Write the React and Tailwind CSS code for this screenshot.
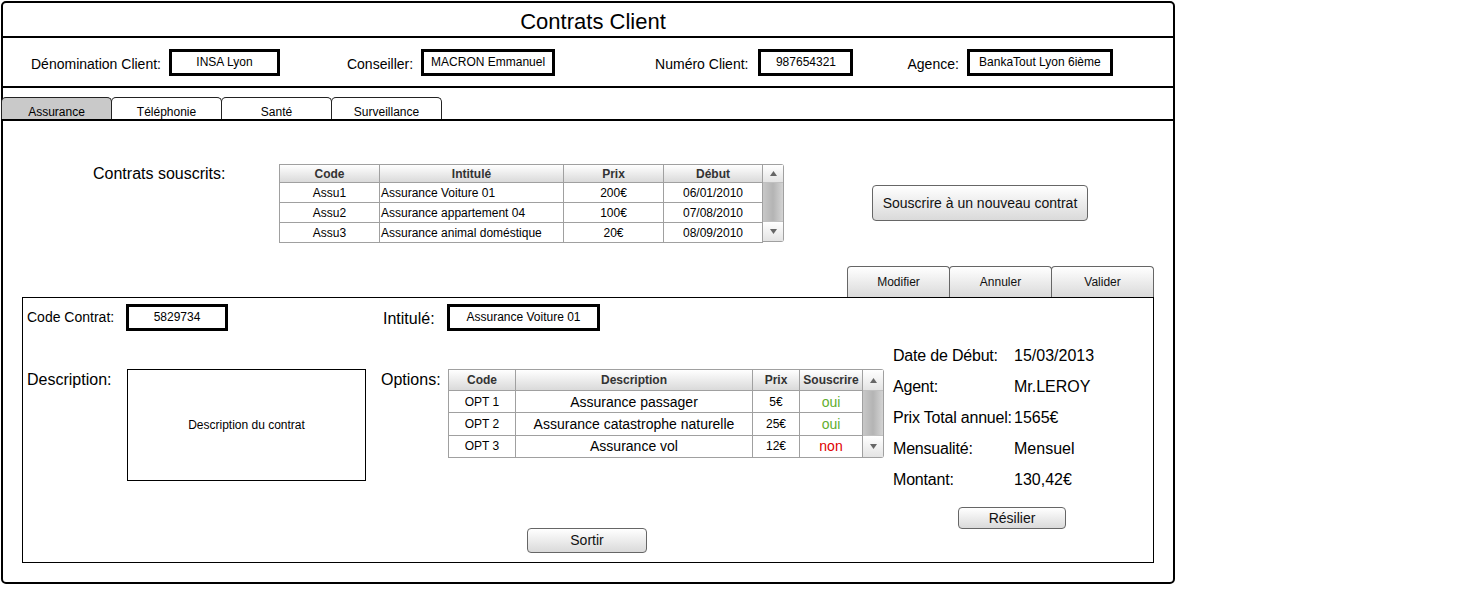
import React from 'react'

const font = { fontFamily: '"Liberation Sans", Arial, sans-serif' }

const contracts = [
  { code: 'Assu1', title: 'Assurance Voiture 01', price: '200€', start: '06/01/2010' },
  { code: 'Assu2', title: 'Assurance appartement 04', price: '100€', start: '07/08/2010' },
  { code: 'Assu3', title: 'Assurance animal doméstique', price: '20€', start: '08/09/2010' },
]

const options = [
  { code: 'OPT 1', desc: 'Assurance passager', price: '5€', sub: 'oui' },
  { code: 'OPT 2', desc: 'Assurance catastrophe naturelle', price: '25€', sub: 'oui' },
  { code: 'OPT 3', desc: 'Assurance vol', price: '12€', sub: 'non' },
]

function Field({ children, className = '' }) {
  return (
    <div className={`flex h-[27px] items-center justify-center border-[3px] border-black text-[12px] ${className}`}>
      {children}
    </div>
  )
}

function Arrow({ up }) {
  return (
    <svg width="7" height="5" viewBox="0 0 7 5">
      {up ? <path d="M0 5 L3.5 0 L7 5 Z" fill="#666" /> : <path d="M0 0 L3.5 5 L7 0 Z" fill="#666" />}
    </svg>
  )
}

function Scrollbar({ headH, downH }) {
  return (
    <div className="flex w-[21px] flex-col rounded-r-[3px] border border-l-0 border-[#a0a0a0] bg-white">
      <div style={{ height: headH }} className="flex items-center justify-center border-b border-[#c0c0c0] bg-gradient-to-b from-white to-[#e4e4e4]">
        <Arrow up />
      </div>
      <div className="flex-1 bg-gradient-to-r from-[#c8c8c8] via-[#b4b4b4] to-[#d4d4d4]" />
      <div style={{ height: downH }} className="flex items-center justify-center border-t border-[#c0c0c0] bg-gradient-to-b from-white to-[#e4e4e4]">
        <Arrow />
      </div>
    </div>
  )
}

function Button({ children, className = '', small }) {
  return (
    <div className={`flex items-center justify-center border border-[#666] bg-gradient-to-b from-white to-[#dadada] text-[#111] ${small ? 'text-[12px]' : 'text-[14px]'} ${className}`}>
      {children}
    </div>
  )
}

function ContractsTable() {
  const cols = ['w-[100px]', 'w-[184px]', 'w-[100px]', 'w-[99px]']
  return (
    <div className="flex h-[78px] items-stretch">
      <table className="h-[78px] table-fixed border-collapse border border-[#a0a0a0] text-[12px] leading-[14px]">
        <thead>
          <tr className="h-[18px] bg-gradient-to-b from-white to-[#d8d8d8]">
            {['Code', 'Intitulé', 'Prix', 'Début'].map((h, i) => (
              <th key={h} className={`${cols[i]} border border-[#a0a0a0] p-0 text-center font-bold text-[#333]`}>{h}</th>
            ))}
          </tr>
        </thead>
        <tbody>
          {contracts.map((r) => (
            <tr key={r.code} className="h-[20px]">
              <td className="border border-[#a0a0a0] p-0 text-center">{r.code}</td>
              <td className="border border-[#a0a0a0] p-0 pl-[1px] text-left">{r.title}</td>
              <td className="border border-[#a0a0a0] p-0 text-center">{r.price}</td>
              <td className="border border-[#a0a0a0] p-0 text-center">{r.start}</td>
            </tr>
          ))}
        </tbody>
      </table>
      <Scrollbar headH={18} downH={20} />
    </div>
  )
}

function OptionsTable() {
  const cols = ['w-[67px]', 'w-[237px]', 'w-[47px]', 'w-[63px]']
  return (
    <div className="flex h-[89px] items-stretch">
      <table className="h-[89px] table-fixed border-collapse border border-[#a0a0a0] leading-[16px]">
        <thead>
          <tr className="h-[21px] bg-gradient-to-b from-white to-[#d8d8d8] text-[12px]">
            {['Code', 'Description', 'Prix', 'Souscrire'].map((h, i) => (
              <th key={h} className={`${cols[i]} border border-[#a0a0a0] p-0 text-center font-bold text-[#333]`}>{h}</th>
            ))}
          </tr>
        </thead>
        <tbody>
          {options.map((r) => (
            <tr key={r.code} className="h-[22px]">
              <td className="border border-[#a0a0a0] p-0 text-center text-[12px]">{r.code}</td>
              <td className="border border-[#a0a0a0] p-0 text-center text-[14px]">{r.desc}</td>
              <td className="border border-[#a0a0a0] p-0 text-center text-[12px]">{r.price}</td>
              <td className={`border border-[#a0a0a0] p-0 text-center text-[14px] ${r.sub === 'oui' ? 'text-[#5fae2e]' : 'text-[#e00000]'}`}>{r.sub}</td>
            </tr>
          ))}
        </tbody>
      </table>
      <Scrollbar headH={21} downH={22} />
    </div>
  )
}

function Tab({ label, active }) {
  return (
    <div className={`-mr-px flex h-[22px] w-[111px] items-end justify-center rounded-t-[5px] border border-b-0 border-[#222] text-[12px] leading-[14px] ${active ? 'bg-[#c9c9c9]' : 'bg-white'}`}>
      {label}
    </div>
  )
}

const info = [
  ['Date de Début:', '15/03/2013'],
  ['Agent:', 'Mr.LEROY'],
  ['Prix Total annuel:', '1565€'],
  ['Mensualité:', 'Mensuel'],
  ['Montant:', '130,42€'],
]

export default function App() {
  return (
    <div style={font} className="h-[593px] w-[1477px] bg-white pl-[1px] pt-[1px] text-black">
      <div className="flex h-[583px] w-[1174px] flex-col rounded-[5px] border-2 border-black">
        <div className="flex h-[35px] items-center justify-center border-b-2 border-black pl-[10px] pt-[3px] text-[22px]">
          Contrats Client
        </div>

        <div className="flex h-[50px] items-center border-b-2 border-black pl-[28px] text-[14px]">
          <span className="pt-[4px]">Dénomination Client:</span>
          <Field className="ml-[8px] w-[111px]">INSA Lyon</Field>
          <span className="ml-[67px] pt-[4px]">Conseiller:</span>
          <Field className="ml-[8px] w-[134px]">MACRON Emmanuel</Field>
          <span className="ml-[100px] pt-[4px]">Numéro Client:</span>
          <Field className="ml-[10px] w-[95px]">987654321</Field>
          <span className="ml-[54px] pt-[4px]">Agence:</span>
          <Field className="ml-[8px] w-[146px]">BankaTout Lyon 6ième</Field>
        </div>

        <div className="flex h-[33px] items-end border-b-2 border-black">
          <div className="-ml-[2px] flex">
            <Tab label="Assurance" active />
            <Tab label="Téléphonie" />
            <Tab label="Santé" />
            <Tab label="Surveillance" />
          </div>
        </div>

        <div className="flex flex-col">
          <div className="mt-[43px] flex items-start">
            <span className="ml-[90px] mt-[1px] w-[186px] text-[16px] leading-[18px]">Contrats souscrits:</span>
            <ContractsTable />
            <Button className="ml-[88px] mt-[21px] h-[36px] w-[216px] rounded-[4px]">Souscrire à un nouveau contrat</Button>
          </div>

          <div className="ml-[19px] mt-[24px] flex w-[1132px] justify-end">
            <div className="flex">
              <Button small className="-mr-px h-[31px] w-[103px] rounded-t-[4px] border-b-0">Modifier</Button>
              <Button small className="-mr-px h-[31px] w-[103px] rounded-t-[4px] border-b-0">Annuler</Button>
              <Button small className="h-[31px] w-[103px] rounded-t-[4px] border-b-0">Valider</Button>
            </div>
          </div>

          <div className="ml-[19px] flex h-[266px] w-[1132px] border border-black">
            <div className="flex w-[870px] flex-col">
              <div className="mt-[6px] flex h-[26px] items-center text-[14px]">
                <span className="ml-[4px] w-[99px]">Code Contrat:</span>
                <Field className="w-[102px]">5829734</Field>
                <span className="ml-[155px] mt-[4px] w-[64px] text-[16px]">Intitulé:</span>
                <Field className="w-[153px]">Assurance Voiture 01</Field>
              </div>
              <div className="mt-[39px] flex h-[112px] items-start">
                <span className="ml-[4px] w-[100px] text-[16px] leading-[22px]">Description:</span>
                <div className="flex h-[112px] w-[239px] items-center justify-center border border-black text-[12px]">
                  Description du contrat
                </div>
                <span className="ml-[15px] w-[67px] text-[16px] leading-[22px]">Options:</span>
                <OptionsTable />
              </div>
              <Button className="ml-[504px] mt-[47px] h-[25px] w-[120px] rounded-[4px]">Sortir</Button>
            </div>
            <div className="flex flex-col pt-[42px] text-[16px]">
              {info.map(([k, v]) => (
                <div key={k} className="flex h-[31px] items-center whitespace-nowrap">
                  <span className="w-[121px] tracking-[-0.2px]">{k}</span>
                  <span>{v}</span>
                </div>
              ))}
              <Button className="ml-[65px] mt-[12px] h-[22px] w-[108px] rounded-[4px]">Résilier</Button>
            </div>
          </div>
        </div>
      </div>
    </div>
  )
}
